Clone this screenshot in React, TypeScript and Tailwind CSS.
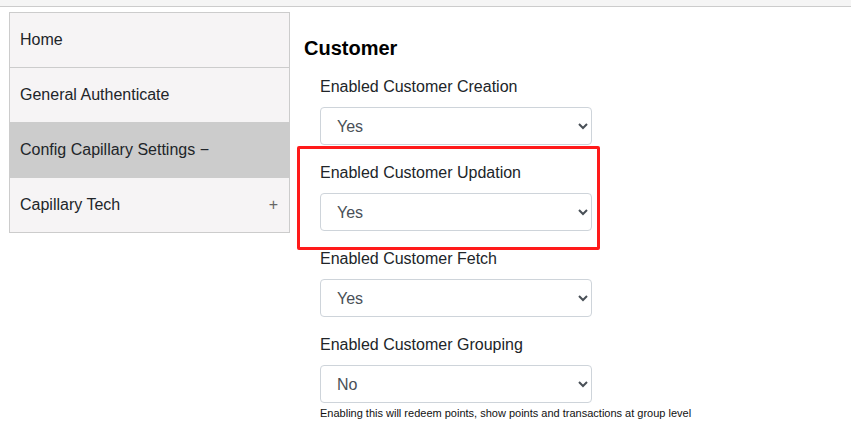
const menu = [
  { label: 'Home', active: false, sign: '' },
  { label: 'General Authenticate', active: false, sign: '' },
  { label: 'Config Capillary Settings −', active: true, sign: '' },
  { label: 'Capillary Tech', active: false, sign: '+' },
]

const fields = [
  { label: 'Enabled Customer Creation', value: 'Yes', marked: false },
  { label: 'Enabled Customer Updation', value: 'Yes', marked: true },
  { label: 'Enabled Customer Fetch', value: 'Yes', marked: false },
  { label: 'Enabled Customer Grouping', value: 'No', marked: false },
]

export default function App() {
  return (
    <div className="min-h-screen bg-white font-['Liberation_Sans',Arial,sans-serif] text-[#212529]">
      {/* top strip */}
      <div className="h-[7px] border-b border-[#cccccc] bg-[#f5f5f5]" />

      <div className="flex items-start pl-[9px] pt-[5px]">
        {/* Sidebar */}
        <div className="w-[281px] border border-[#cccccc] bg-[#f6f4f5]">
          {menu.map((item, i) => (
            <div
              key={item.label}
              className={`flex items-center justify-between px-[10px] text-[16px] ${
                i < menu.length - 1 ? 'h-[55px] border-b border-[#cccccc]' : 'h-[54px]'
              } ${item.active ? 'bg-[#cccccc]' : ''}`}
            >
              <span>{item.label}</span>
              {item.sign && <span className="pr-[1px] text-[16px] text-[#666666]">{item.sign}</span>}
            </div>
          ))}
        </div>

        {/* Content */}
        <div className="ml-[14px] pt-[24px]">
          <h5 className="text-[20px] font-bold leading-[24px] text-black">Customer</h5>
          <div className="mt-[15px] pl-4">
            {fields.map((f, i) => {
              const last = i === fields.length - 1
              return (
                <div key={f.label} className={`relative ${last ? '' : 'mb-4'}`}>
                  {f.marked && (
                    <div className="pointer-events-none absolute left-[-23px] top-[-15px] h-[104px] w-[303px] rounded-[2px] border-[3px] border-[#ff1a1a]" />
                  )}
                  <label className="mb-2 block text-[16px] leading-[24px]">{f.label}</label>
                  <select
                    defaultValue={f.value}
                    className="block h-[38px] w-[272px] rounded border border-[#ced4da] bg-white px-3 text-[16px] text-[#495057]"
                  >
                    <option>Yes</option>
                    <option>No</option>
                  </select>
                  {last && (
                    <p className="mt-[2px] whitespace-nowrap text-[11px] leading-[16px] text-[#111111]">
                      Enabling this will redeem points, show points and transactions at group level
                    </p>
                  )}
                </div>
              )
            })}
          </div>
        </div>
      </div>
    </div>
  )
}
